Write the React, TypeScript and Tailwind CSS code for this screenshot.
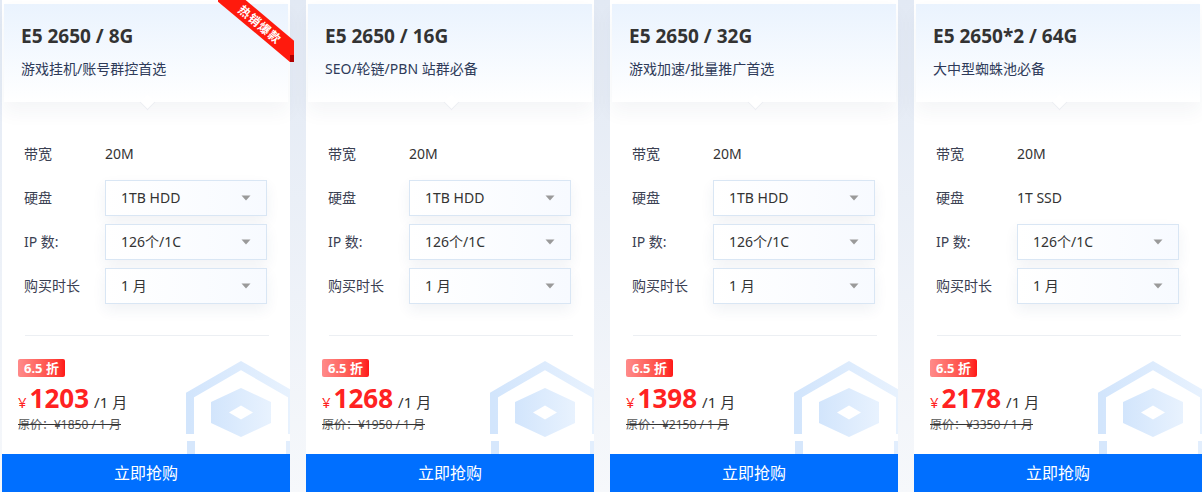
import React from "react";

type Row = { label: string; value: string; select: boolean };
type Plan = {
  title: string;
  sub: string;
  rows: Row[];
  price: string;
  orig: string;
  hot?: boolean;
};

const plans: Plan[] = [
  {
    title: "E5 2650 / 8G",
    sub: "游戏挂机/账号群控首选",
    rows: [
      { label: "带宽", value: "20M", select: false },
      { label: "硬盘", value: "1TB HDD", select: true },
      { label: "IP 数:", value: "126个/1C", select: true },
      { label: "购买时长", value: "1 月", select: true },
    ],
    price: "1203",
    orig: "原价：¥1850 / 1 月",
    hot: true,
  },
  {
    title: "E5 2650 / 16G",
    sub: "SEO/轮链/PBN 站群必备",
    rows: [
      { label: "带宽", value: "20M", select: false },
      { label: "硬盘", value: "1TB HDD", select: true },
      { label: "IP 数:", value: "126个/1C", select: true },
      { label: "购买时长", value: "1 月", select: true },
    ],
    price: "1268",
    orig: "原价：¥1950 / 1 月",
  },
  {
    title: "E5 2650 / 32G",
    sub: "游戏加速/批量推广首选",
    rows: [
      { label: "带宽", value: "20M", select: false },
      { label: "硬盘", value: "1TB HDD", select: true },
      { label: "IP 数:", value: "126个/1C", select: true },
      { label: "购买时长", value: "1 月", select: true },
    ],
    price: "1398",
    orig: "原价：¥2150 / 1 月",
  },
  {
    title: "E5 2650*2 / 64G",
    sub: "大中型蜘蛛池必备",
    rows: [
      { label: "带宽", value: "20M", select: false },
      { label: "硬盘", value: "1T SSD", select: false },
      { label: "IP 数:", value: "126个/1C", select: true },
      { label: "购买时长", value: "1 月", select: true },
    ],
    price: "2178",
    orig: "原价：¥3350 / 1 月",
  },
];

function HexIcon() {
  return (
    <svg
      className="absolute left-[180px] top-[355px]"
      width="120"
      height="100"
      viewBox="0 0 120 100"
    >
      <defs>
        <linearGradient id="hg" x1="0" y1="0" x2="1" y2="0">
          <stop offset="0" stopColor="#d2e5fc" />
          <stop offset="1" stopColor="#e8f2fe" />
        </linearGradient>
      </defs>
      <path
        d="M8 79 L8 40 L59 10.5 L110 40 L110 79"
        fill="none"
        stroke="url(#hg)"
        strokeWidth="8"
      />
      <path
        fillRule="evenodd"
        fill="url(#hg)"
        d="M59 33 L89 47 L89 68 L59 82 L29 68 L29 47 Z M47 57.5 L59 64.5 L71 57.5 L59 50.5 Z"
      />
      <rect x="5" y="86" width="8" height="14" fill="#d6e7fc" />
      <rect x="104" y="86" width="8" height="14" fill="#e2eefd" />
    </svg>
  );
}

function Ribbon() {
  return (
    <div className="absolute top-0 right-[-4px] w-[76px] h-[62px] z-20 overflow-hidden pointer-events-none">
      <div className="absolute left-[-18px] top-[15px] w-[120px] h-[19px] rotate-[40deg] bg-[#ff1a0d] flex items-center justify-center">
        <span className="text-[12px] leading-[14px] font-bold text-white tracking-[1px]">热销爆款</span>
      </div>
      <div className="absolute right-0 bottom-0 w-[4px] h-[7px] bg-[#b00000]" />
    </div>
  );
}

function Card({ p }: { p: Plan }) {
  return (
    <div className="relative w-[288px] shrink-0 bg-white flex flex-col pt-[4px]">
      <div className="absolute inset-0 overflow-hidden pointer-events-none">
        <HexIcon />
      </div>
      {p.hot && <Ribbon />}
      <div className="relative z-10 mx-[2px] h-[102px] bg-gradient-to-b from-[#eaf3fe] to-white pt-[20px] pl-[17px] shadow-[0_10px_18px_rgba(30,50,90,0.05)]">
        <div className="text-[19px] leading-[24px] font-bold text-[#333]">{p.title}</div>
        <div className="mt-[11px] text-[14px] leading-[20px] text-[#2e3a59]">{p.sub}</div>
        <div className="absolute left-[138px] bottom-[-6px] w-[11px] h-[11px] rotate-45 bg-white border-r border-b border-[#eceef2]" />
      </div>
      <div className="relative z-10 pt-[34px] pl-[22px] pr-[21px] flex flex-col gap-[8px]">
        {p.rows.map((r) => (
          <div key={r.label} className="flex items-center h-[36px]">
            <div className="w-[81px] text-[14px] text-[#3a4052]">{r.label}</div>
            {r.select ? (
              <div className="w-[162px] h-[36px] border border-[#d9e6f4] bg-gradient-to-r from-white to-[#f7faff] shadow-[0_6px_14px_rgba(40,70,120,0.07)] flex items-center pl-[15px] pr-[15px] justify-between">
                <span className="text-[14px] text-[#333]">{r.value}</span>
                <svg width="10" height="6" viewBox="0 0 10 6">
                  <path d="M0.5 0.5 L9.5 0.5 L5 5.5 Z" fill="#9a9a9a" />
                </svg>
              </div>
            ) : (
              <div className="text-[14px] text-[#333]">{r.value}</div>
            )}
          </div>
        ))}
        <div className="mt-[23px] h-px bg-[#eceff3] ml-[1px]" />
      </div>
      <div className="relative z-10 pl-[16px] pt-[19px]">
        <div className="inline-flex items-center h-[18px] px-[6px] bg-gradient-to-r from-[#ff8a8a] to-[#ff1616] text-white text-[13px] font-bold leading-[18px] rounded-[2px]">
          6.5 折
        </div>
        <div className="mt-[4px] flex items-baseline h-[30px]">
          <span className="text-[15px] text-[#ff2222] mr-[3px]">¥</span>
          <span className="text-[26px] leading-[30px] font-bold text-[#ff2222]">{p.price}</span>
          <span className="ml-[5px] text-[15px] text-[#333]">/1 月</span>
        </div>
        <div className="mt-[4px] text-[12px] leading-[16px] text-[#555] line-through decoration-[#333]">
          {p.orig}
        </div>
      </div>
      <div className="relative z-10 mt-[21px] h-[40px] bg-[#006fff] text-white text-[16px] flex items-center justify-center">
        立即抢购
      </div>
    </div>
  );
}

export default function App() {
  return (
    <div
      className="w-[1202px] h-[492px] overflow-hidden flex gap-[16px] pl-[2px] bg-gradient-to-b from-[#e2e9f4] to-[#f6f8fb]"
      style={{ fontFamily: '"Noto Sans", "Noto Sans CJK SC", sans-serif' }}
    >
      {plans.map((p) => (
        <Card key={p.title} p={p} />
      ))}
    </div>
  );
}
